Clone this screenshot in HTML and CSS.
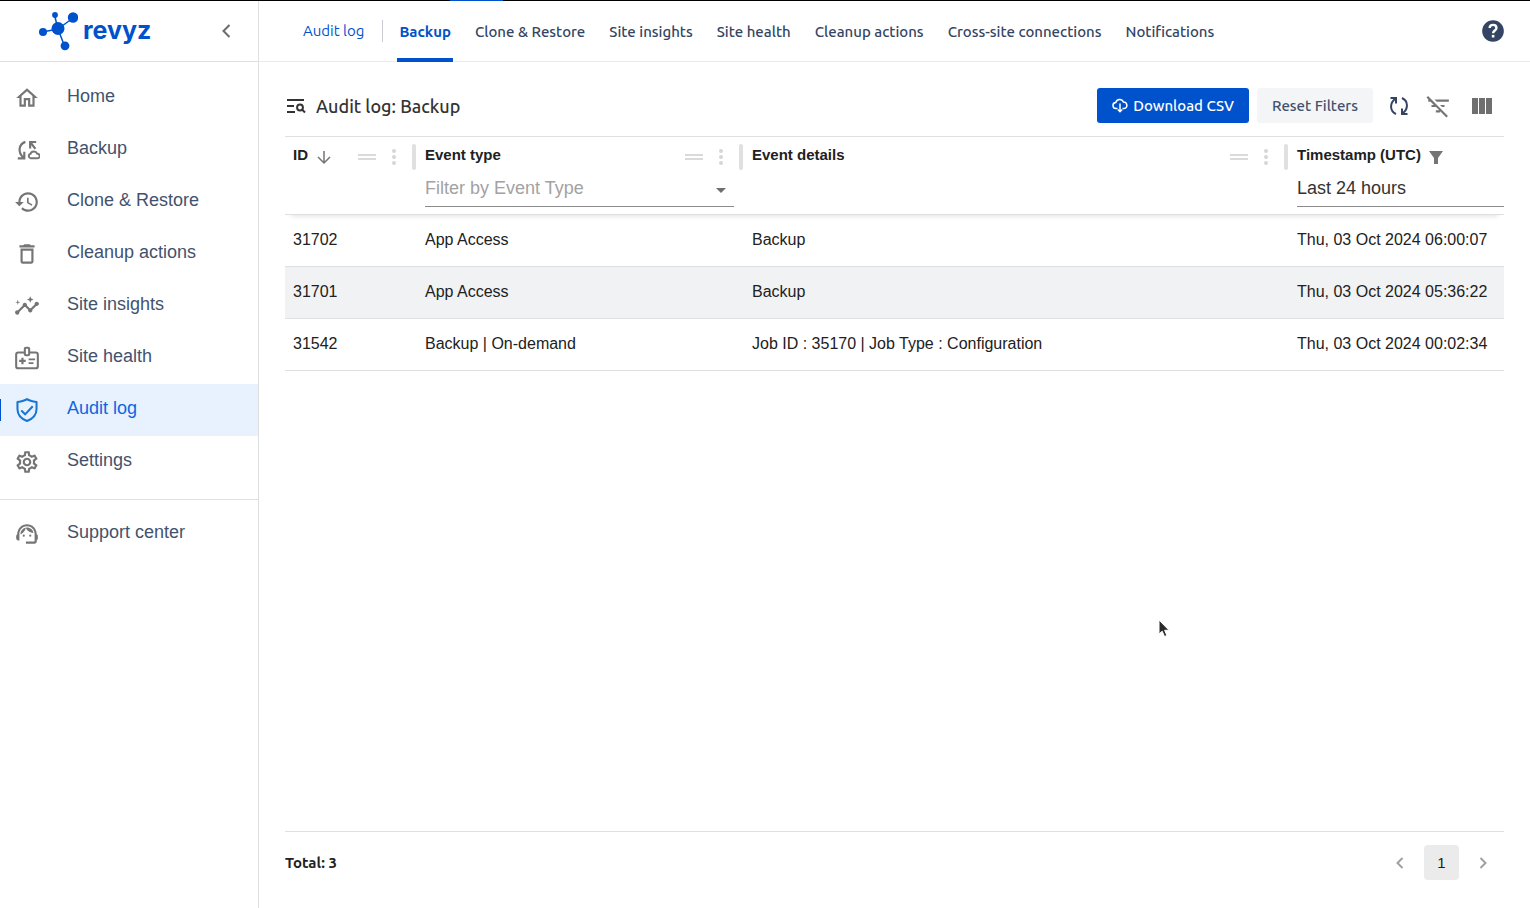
FILE: index.html
```html
<!DOCTYPE html>
<html lang="en">
<head>
<meta charset="utf-8">
<meta name="viewport" content="width=device-width, initial-scale=1">
<title>Revyz - Audit log: Backup</title>
<link rel="stylesheet" href="styles.css">
</head>
<body>
<div class="app">
  <aside class="sidebar">
    <div class="brand">
      <a class="logo" href="#">
        <svg class="logo-mark" width="40" height="40" viewBox="0 0 40 40" aria-hidden="true">
          <path d="M20 18 16.500 4M20 18 35 7M20 18 4.500 21M20 18 26.500 35" stroke="currentColor" stroke-width="1.500" fill="none"/>
          <g fill="currentColor"><circle cx="20" cy="17.500" r="6.500"/><circle cx="17" cy="4" r="2.900"/><circle cx="35" cy="6.500" r="5.200"/><circle cx="5" cy="21" r="4"/><circle cx="27" cy="34.800" r="4.400"/></g>
        </svg>
        <span class="logo-text">revyz</span>
      </a>
      <button class="icon-button" type="button" aria-label="Collapse sidebar">
        <svg width="24" height="24" viewBox="0 0 24 24"><path d="M15.500 6 9.500 12l6 6" fill="none" stroke="#6b6b6b" stroke-width="2"/></svg>
      </button>
    </div>
    <nav class="side-nav" aria-label="Main">
      <a class="side-link" href="#"><svg class="side-icon" viewBox="0 0 24 24"><path d="M12 5.690l5 4.500V18h-2v-6H9v6H7v-7.810zM12 3 2 12h3v8h6v-6h2v6h6v-8h3z"/></svg><span class="side-label">Home</span></a>
      <a class="side-link" href="#"><svg class="side-icon" viewBox="0 0 24 24"><path d="M10.500 4.500C4 7 3.500 14 8.500 19M3.500 19.700h6v-6M20.500 4.600h-5.600v6M15.300 5l4.400 6" fill="none" stroke="currentColor" stroke-width="2"/><path d="M15.500 19.700a2.200 2.200 0 0 1-.2-4.300c.7-2.500 5-2.700 6-.1 3 .2 3.200 4.400.2 4.400z" fill="none" stroke="currentColor" stroke-width="1.800"/></svg><span class="side-label">Backup</span></a>
      <a class="side-link" href="#"><svg class="side-icon" viewBox="0 0 24 24"><path d="M13 3c-4.970 0-9 4.030-9 9H1l3.890 3.890.070.140L9 12H6c0-3.870 3.130-7 7-7s7 3.130 7 7-3.130 7-7 7c-1.930 0-3.680-.790-4.940-2.060l-1.420 1.420C8.270 19.990 10.510 21 13 21c4.970 0 9-4.030 9-9s-4.030-9-9-9m-1 5v5l4.250 2.520.770-1.280-3.520-2.090V8z"/></svg><span class="side-label">Clone &amp; Restore</span></a>
      <a class="side-link" href="#"><svg class="side-icon" viewBox="0 0 24 24"><path d="M6 19c0 1.100.900 2 2 2h8c1.100 0 2-.900 2-2V7H6zM8 9h8v10H8zm7.500-5-1-1h-5l-1 1H5v2h14V4z"/></svg><span class="side-label">Cleanup actions</span></a>
      <a class="side-link" href="#"><svg class="side-icon" viewBox="0 0 24 24"><path d="M21 8c-1.450 0-2.260 1.440-1.930 2.510l-3.550 3.560c-.300-.090-.740-.090-1.040 0l-2.550-2.550C12.270 10.450 11.460 9 10 9c-1.450 0-2.270 1.440-1.930 2.520l-4.560 4.550C2.440 15.740 1 16.550 1 18c0 1.100.900 2 2 2 1.450 0 2.260-1.440 1.930-2.510l4.550-4.560c.300.090.740.090 1.040 0l2.550 2.550C12.730 16.550 13.540 18 15 18c1.450 0 2.270-1.440 1.930-2.520l3.560-3.550c1.070.330 2.510-.480 2.510-1.930 0-1.100-.900-2-2-2zM15 9l.940-2.070L18 6l-2.060-.930L15 3l-.920 2.070L12 6l2.080.930zM3.500 11 4 9l2-.500L4 8l-.500-2L3 8l-2 .500L3 9z"/></svg><span class="side-label">Site insights</span></a>
      <a class="side-link" href="#"><svg class="side-icon" viewBox="0 0 24 24"><g fill="none" stroke="currentColor"><path d="M9.500 7H4a2 2 0 0 0-2 2v10.500a2 2 0 0 0 2 2h16a2 2 0 0 0 2-2V9a2 2 0 0 0-2-2h-5.500" stroke-width="1.900"/><rect x="10" y="2.500" width="4" height="7" rx="1" stroke-width="1.900"/><path d="M4.800 14.700h6M7.800 11.700v6" stroke-width="2"/><path d="M13.500 13.300h6M13.500 16.700h4.500" stroke-width="1.500"/></g></svg><span class="side-label">Site health</span></a>
      <a class="side-link is-active" href="#" aria-current="page"><svg class="side-icon" viewBox="0 0 24 24"><path d="M12 2C9.500 3.700 6 4.200 3.200 4.600V11c0 5.500 3.500 9 8.800 11.200 5.300-2.200 8.800-5.700 8.800-11.200V4.600C18 4.200 14.500 3.700 12 2z" fill="none" stroke="currentColor" stroke-width="1.900" stroke-linejoin="round"/><path d="M6.700 12.500 10.300 16l7-7.500" fill="none" stroke="currentColor" stroke-width="1.900"/></svg><span class="side-label">Audit log</span></a>
      <a class="side-link" href="#"><svg class="side-icon" viewBox="0 0 24 24"><path d="M19.430 12.980c.040-.320.070-.640.070-.980 0-.340-.030-.660-.070-.980l2.110-1.650c.190-.150.240-.420.120-.640l-2-3.460c-.090-.160-.260-.250-.440-.250-.060 0-.120.010-.170.030l-2.490 1c-.520-.400-1.080-.730-1.690-.980l-.380-2.650C14.460 2.180 14.250 2 14 2h-4c-.250 0-.460.180-.490.420l-.380 2.650c-.610.250-1.170.590-1.690.980l-2.490-1c-.060-.020-.120-.030-.180-.030-.170 0-.340.090-.430.250l-2 3.460c-.130.220-.070.490.120.640l2.110 1.650c-.040.320-.070.650-.070.980 0 .330.030.660.070.980l-2.110 1.650c-.190.150-.240.420-.120.640l2 3.460c.090.160.260.250.440.250.060 0 .120-.010.170-.030l2.490-1c.520.400 1.080.730 1.690.980l.380 2.650c.030.240.240.420.490.420h4c.250 0 .460-.180.490-.420l.380-2.650c.610-.250 1.170-.590 1.690-.980l2.490 1c.060.020.120.030.180.030.170 0 .340-.090.430-.250l2-3.460c.120-.220.070-.490-.120-.640l-2.110-1.650zm-1.980-1.710c.040.310.050.520.050.730 0 .210-.020.430-.050.730l-.140 1.130.890.700 1.080.840-.700 1.210-1.270-.510-1.040-.420-.900.680c-.430.320-.840.560-1.250.730l-1.060.430-.160 1.130-.200 1.350h-1.400l-.190-1.350-.160-1.130-1.060-.430c-.430-.180-.830-.410-1.230-.710l-.910-.700-1.060.430-1.270.510-.700-1.210 1.080-.840.890-.700-.140-1.130c-.030-.310-.050-.540-.050-.740s.020-.430.050-.730l.140-1.130-.890-.700-1.080-.840.700-1.210 1.270.510 1.040.420.900-.680c.430-.320.840-.560 1.250-.730l1.060-.430.160-1.130.200-1.350h1.390l.190 1.350.160 1.130 1.060.430c.430.180.830.410 1.230.710l.910.700 1.060-.430 1.270-.510.700 1.210-1.070.850-.890.700.140 1.130zM12 8c-2.210 0-4 1.790-4 4s1.790 4 4 4 4-1.790 4-4-1.790-4-4-4zm0 6c-1.100 0-2-.900-2-2s.900-2 2-2 2 .900 2 2-.900 2-2 2z"/></svg><span class="side-label">Settings</span></a>
    </nav>
    <nav class="side-nav side-nav-support" aria-label="Support">
      <a class="side-link" href="#"><svg class="side-icon" viewBox="0 0 24 24"><path d="M21 12.220C21 6.730 16.740 3 12 3c-4.690 0-9 3.650-9 9.280-.600.340-1 .980-1 1.720v2c0 1.100.900 2 2 2h1v-6.100c0-3.870 3.130-7 7-7s7 3.130 7 7V19h-8v2h8c1.100 0 2-.900 2-2v-1.220c.590-.310 1-.920 1-1.640v-2.300c0-.700-.410-1.310-1-1.620zM18 11.030C17.520 8.180 15.040 6 12.050 6c-3.030 0-6.290 2.510-6.030 6.450 2.470-1.010 4.330-3.210 4.860-5.890 1.310 2.630 4 4.440 7.120 4.470z"/><circle cx="9" cy="13.500" r="1"/><circle cx="15" cy="13.500" r="1"/></svg><span class="side-label">Support center</span></a>
    </nav>
  </aside>

  <div class="main">
    <header class="topbar">
      <a class="section-link" href="#">Audit log</a>
      <nav class="tabs" aria-label="Audit log">
        <a class="tab is-active" href="#" aria-current="page">Backup</a>
        <a class="tab" href="#">Clone &amp; Restore</a>
        <a class="tab" href="#">Site insights</a>
        <a class="tab" href="#">Site health</a>
        <a class="tab" href="#">Cleanup actions</a>
        <a class="tab" href="#">Cross-site connections</a>
        <a class="tab" href="#">Notifications</a>
      </nav>
      <button class="icon-button help" type="button" aria-label="Help">
        <svg width="26" height="26" viewBox="0 0 24 24" fill="#344563"><path d="M12 2C6.480 2 2 6.480 2 12s4.480 10 10 10 10-4.480 10-10S17.520 2 12 2z"/><path d="M8.900 9.300c.1-4 6.300-3.900 6.300-.1 0 2.400-3.100 2.400-3.100 4.900" fill="none" stroke="#fff" stroke-width="2.200"/><path d="M10.900 15.600h2.400V18h-2.400z" fill="#fff"/></svg>
      </button>
    </header>

    <main class="content">
      <div class="toolbar">
        <svg class="title-icon" width="20" height="16" viewBox="0 0 20 16" fill="none" stroke="#333" stroke-width="2" aria-hidden="true"><path d="M1 2h17M1 8h7M1 14h8"/><circle cx="14" cy="9.500" r="2.900"/><path d="m16 11.500 3 3"/></svg>
        <h1 class="title">Audit log: Backup</h1>
        <button class="button button-primary" type="button">
          <svg width="16" height="16" viewBox="0 0 16 16" fill="none" stroke="currentColor" stroke-width="1.500" aria-hidden="true"><path d="M5.500 10.500H4.200a3 3 0 0 1-.4-6C4.800.8 10 .5 11.400 4c4.300-.1 4.700 6.300.8 6.500h-1.700M8 5.500v8M5.800 11.500 8 13.700l2.200-2.200"/></svg>
          Download CSV
        </button>
        <button class="button button-subtle" type="button">Reset Filters</button>
        <div class="tools">
          <button class="icon-button" type="button" aria-label="Refresh">
            <svg width="20" height="20" viewBox="0 0 20 20" fill="none" stroke="#344563" stroke-width="2"><path d="M7 18C.5 15 .5 7 6.500 2.500M1.500 2H7v5.500M13 2c6.500 3 6.500 11 .5 15.500M18.500 18H13v-5.500"/></svg>
          </button>
          <button class="icon-button" type="button" aria-label="Hide filters">
            <svg width="26" height="26" viewBox="0 0 24 24" fill="#757575"><path d="M10.830 8H22V6H8.830zm5 5H18v-2h-4.170zM14 16.830V18h-4v-2h3.170l-3-3H6v-2h2.170l-3-3H3V6h.170L1.390 4.220 2.800 2.810l18.380 18.380-1.410 1.410z"/></svg>
          </button>
          <button class="icon-button" type="button" aria-label="Choose columns">
            <svg width="20" height="16" viewBox="0 0 20 16" fill="#6f6f6f"><path d="M0 0h6v16H0zM7 0h6v16H7zM14 0h6v16h-6z"/></svg>
          </button>
        </div>
      </div>

      <div class="table-area">
        <table class="log-table">
          <colgroup><col class="col-id"><col class="col-type"><col class="col-details"><col class="col-time"></colgroup>
          <thead>
            <tr>
              <th scope="col">
                <div class="head-row">
                  <span class="head-label">ID</span>
                  <svg width="16" height="16" viewBox="0 0 16 16" fill="none" stroke="#757575" stroke-width="1.500"><path d="M8 2v12M2 8l6 6 6-6"/></svg>
                  <span class="head-tools"><svg width="18" height="8" viewBox="0 0 18 8" fill="#dadada"><path d="M0 1h18v2H0zM0 5h18v2H0z"/></svg><svg width="4" height="16" viewBox="0 0 4 16" fill="#d6d6d6"><circle cx="2" cy="2" r="2"/><circle cx="2" cy="8" r="2"/><circle cx="2" cy="14" r="2"/></svg><i class="resizer"></i></span>
                </div>
              </th>
              <th scope="col">
                <div class="head-row">
                  <span class="head-label">Event type</span>
                  <span class="head-tools"><svg width="18" height="8" viewBox="0 0 18 8" fill="#dadada"><path d="M0 1h18v2H0zM0 5h18v2H0z"/></svg><svg width="4" height="16" viewBox="0 0 4 16" fill="#d6d6d6"><circle cx="2" cy="2" r="2"/><circle cx="2" cy="8" r="2"/><circle cx="2" cy="14" r="2"/></svg><i class="resizer"></i></span>
                </div>
                <div class="filter filter-type">
                  <select class="filter-select is-empty" aria-label="Filter by Event Type"><option>Filter by Event Type</option></select>
                  <svg class="caret" width="10" height="10" viewBox="0 0 10 10" fill="#6f6f6f"><path d="M0 5h10l-5 5z"/></svg>
                </div>
              </th>
              <th scope="col">
                <div class="head-row">
                  <span class="head-label">Event details</span>
                  <span class="head-tools"><svg width="18" height="8" viewBox="0 0 18 8" fill="#dadada"><path d="M0 1h18v2H0zM0 5h18v2H0z"/></svg><svg width="4" height="16" viewBox="0 0 4 16" fill="#d6d6d6"><circle cx="2" cy="2" r="2"/><circle cx="2" cy="8" r="2"/><circle cx="2" cy="14" r="2"/></svg><i class="resizer"></i></span>
                </div>
              </th>
              <th scope="col">
                <div class="head-row">
                  <span class="head-label">Timestamp (UTC)</span>
                  <svg width="14" height="14" viewBox="0 0 14 14" fill="#757575"><path d="M0 1h14L9 8v6H5V8z"/></svg>
                </div>
                <div class="filter">
                  <select class="filter-select" aria-label="Timestamp range"><option>Last 24 hours</option></select>
                </div>
              </th>
            </tr>
          </thead>
          <tbody>
            <tr><td>31702</td><td>App Access</td><td>Backup</td><td>Thu, 03 Oct 2024 06:00:07</td></tr>
            <tr class="is-shaded"><td>31701</td><td>App Access</td><td>Backup</td><td>Thu, 03 Oct 2024 05:36:22</td></tr>
            <tr><td>31542</td><td>Backup | On-demand</td><td>Job ID : 35170 | Job Type : Configuration</td><td>Thu, 03 Oct 2024 00:02:34</td></tr>
          </tbody>
        </table>
      </div>

      <footer class="footer">
        <span class="total">Total: 3</span>
        <nav class="pager" aria-label="Pages">
          <button class="icon-button" type="button" aria-label="Previous page" disabled><svg width="12" height="12" viewBox="0 0 12 12" fill="none" stroke="#a0a0a0" stroke-width="2"><path d="M8.500 1 3.500 6l5 5"/></svg></button>
          <button class="page" type="button" aria-current="page">1</button>
          <button class="icon-button" type="button" aria-label="Next page" disabled><svg width="12" height="12" viewBox="0 0 12 12" fill="none" stroke="#a0a0a0" stroke-width="2"><path d="m3.500 1 5 5-5 5"/></svg></button>
        </nav>
      </footer>
    </main>
  </div>
</div>
<svg class="pointer" width="14" height="20" viewBox="0 0 14 20" aria-hidden="true"><path d="M1 1v14l3.200-2.800 2.300 5.300 2.400-1-2.300-5.200H11z" fill="#2b2b2b" stroke="#fff" stroke-width="1"/></svg>
</body>
</html>
```
FILE: styles.css
```css
:root {
  --blue: #0052cc;
  --ink: #212121;
  --slate: #42526e;
  --line: #dedfe1;
  --ui: "Ubuntu", "Noto Sans", sans-serif;
  --text: "Nimbus Sans", "Nimbus Sans L", "Liberation Sans", Arial, sans-serif;
}

* { box-sizing: border-box; }

body {
  margin: 0;
  background: #fff;
  color: var(--ink);
  font-family: var(--text);
}

a { color: inherit; text-decoration: none; }

button, select {
  margin: 0;
  padding: 0;
  border: 0;
  background: none;
  color: inherit;
  font: inherit;
}

svg { display: block; flex: none; }

.icon-button {
  display: flex;
  align-items: center;
  justify-content: center;
}

.app {
  display: flex;
  min-height: 100vh;
  border-top: 1px solid;
  border-image: linear-gradient(to right, #000 450px, var(--blue) 450px, var(--blue) 503px, #000 503px) 1;
}

/* Sidebar */
.sidebar {
  flex: none;
  width: 259px;
  border-right: 1px solid var(--line);
}

.brand {
  display: flex;
  align-items: center;
  justify-content: space-between;
  height: 61px;
  padding: 0 20px 0 38px;
  border-bottom: 1px solid var(--line);
}

.logo {
  display: flex;
  align-items: center;
  gap: 5px;
  color: var(--blue);
}

.logo-text {
  padding-bottom: 2px;
  font: 700 25px/32px Inter, sans-serif;
}

.side-nav { padding-top: 10px; }

.side-nav-support {
  margin-top: 11px;
  padding-top: 8px;
  border-top: 1px solid var(--line);
}

.side-link {
  display: flex;
  align-items: center;
  gap: 27px;
  height: 52px;
  padding-left: 14px;
  color: #757575;
}

.side-icon {
  width: 26px;
  height: 26px;
  fill: currentColor;
}

.side-label {
  padding-bottom: 4px;
  color: var(--slate);
  font-size: 18px;
  line-height: 24px;
}

.side-link.is-active {
  background: linear-gradient(var(--blue), var(--blue)) left center / 1px 22px no-repeat #e8f2ff;
  color: #1976d2;
}

.side-link.is-active .side-label { color: #0c66e4; }

/* Top bar */
.main {
  display: flex;
  flex: 1;
  flex-direction: column;
  min-width: 0;
}

.topbar {
  display: flex;
  align-items: center;
  height: 61px;
  padding: 0 24px 0 44px;
  border-bottom: 1px solid #ebecf0;
  color: #344563;
  font: 500 15px/22px var(--ui);
  white-space: nowrap;
}

.section-link {
  padding-right: 18px;
  border-right: 1px solid #c8ccd2;
  color: var(--blue);
  font-weight: 400;
}

.tabs {
  display: flex;
  flex: 1;
  gap: 20px;
  align-self: stretch;
  margin-left: 14px;
}

.tab {
  display: flex;
  align-items: center;
  height: 61px;
  padding: 4px 2px 0;
  border-bottom: 4px solid transparent;
}

.tab.is-active {
  border-color: var(--blue);
  color: var(--blue);
  font-weight: 600;
}

/* Content */
.content {
  display: flex;
  flex: 1;
  flex-direction: column;
  padding: 26px 26px 0;
}

.toolbar {
  display: flex;
  align-items: center;
  gap: 8px;
  padding-bottom: 13px;
  border-bottom: 1px solid var(--line);
}

.title-icon { margin-left: 1px; }

.title {
  flex: 1;
  margin: 0 0 0 2px;
  color: #333;
  font: 500 18px/24px var(--ui);
}

.button {
  display: flex;
  align-items: center;
  justify-content: center;
  gap: 5px;
  height: 35px;
  padding: 0 15px;
  border-radius: 3px;
  font: 500 15px/22px var(--ui);
  white-space: nowrap;
}

.button-primary { background: var(--blue); color: #fff; }
.button-subtle { background: #f4f5f7; color: var(--slate); }

.tools {
  display: flex;
  align-items: center;
  gap: 16px;
  padding: 0 12px 0 8px;
}

.tools .icon-button:last-child { margin-left: 5px; }

/* Log table */
.table-area { flex: 1; }

.log-table {
  width: 100%;
  border-collapse: separate;
  border-spacing: 0;
  table-layout: fixed;
}

.col-id { width: 132px; }
.col-type { width: 327px; }
.col-time { width: 215px; }

.log-table thead { box-shadow: 0 7px 5px -6px #00000020; }

.log-table th {
  height: 78px;
  padding: 6px 0 0 8px;
  border-bottom: 1px solid var(--line);
  font-size: 15px;
  line-height: 24px;
  text-align: left;
  vertical-align: top;
}

.head-row {
  display: flex;
  align-items: center;
  gap: 8px;
  height: 28px;
}

.head-label { padding-bottom: 4px; }

.head-tools {
  display: flex;
  align-items: center;
  gap: 16px;
  margin-left: auto;
  padding-right: 1px;
}

.resizer {
  width: 4px;
  height: 26px;
  border-radius: 2px;
  background: #e0e0e0;
}

.filter {
  display: flex;
  align-items: center;
  height: 36px;
  padding-bottom: 2px;
  border-bottom: 1px solid #8c8c8c;
}

.filter-type {
  margin-right: 10px;
  padding-right: 8px;
}

.filter-select {
  flex: 1;
  min-width: 0;
  appearance: none;
  color: #333;
  font: 400 18px/24px var(--text);
}

.filter-select.is-empty { color: #a2a2a2; }

.log-table td {
  height: 52px;
  padding: 0 0 2px 8px;
  border-bottom: 1px solid var(--line);
  font-size: 16px;
  line-height: 22px;
  white-space: nowrap;
}

.is-shaded { background: #f1f2f4; }

/* Footer */
.footer {
  display: flex;
  align-items: center;
  justify-content: space-between;
  height: 77px;
  padding-bottom: 15px;
  border-top: 1px solid var(--line);
}

.total { font: 700 15px/22px var(--ui); }

.pager {
  display: flex;
  align-items: center;
  gap: 18px;
  padding-right: 15px;
}

.page {
  width: 35px;
  height: 35px;
  border-radius: 4px;
  background: #ebebeb;
  font-size: 15px;
}

.pointer {
  position: absolute;
  top: 619px;
  left: 1158px;
}
```
